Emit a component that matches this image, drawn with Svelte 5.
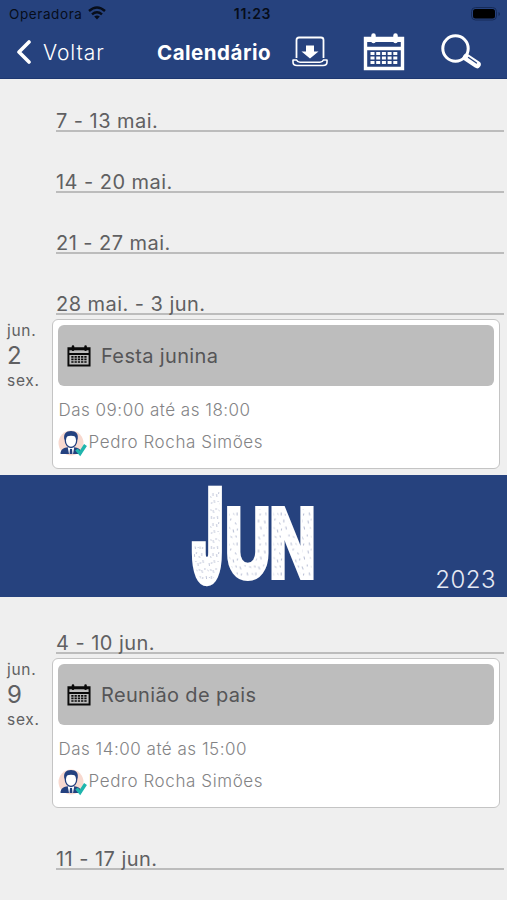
<script lang="ts">
  type CalendarEvent = {
    month: string;
    day: number;
    weekday: string;
    title: string;
    time: string;
    author: string;
  };

  type Week = { label: string; event?: CalendarEvent };

  const author = 'Pedro Rocha Simões';

  const may: Week[] = [
    { label: '7 - 13 mai.' },
    { label: '14 - 20 mai.' },
    { label: '21 - 27 mai.' },
    {
      label: '28 mai. - 3 jun.',
      event: { month: 'jun.', day: 2, weekday: 'sex.', title: 'Festa junina', time: 'Das 09:00 até as 18:00', author }
    }
  ];

  const june: Week[] = [
    {
      label: '4 - 10 jun.',
      event: { month: 'jun.', day: 9, weekday: 'sex.', title: 'Reunião de pais', time: 'Das 14:00 até as 15:00', author }
    },
    { label: '11 - 17 jun.' }
  ];

  // Small scratches for the chalk texture of the month name
  const scratches = [
    [3, 4, 1, 3], [9, 2, -1, 2], [15, 6, 2, 2], [22, 3, 0, 3], [6, 11, 2, 1],
    [12, 13, 1, 3], [19, 12, -1, 2], [25, 10, 1, 3], [2, 18, 0, 2], [8, 20, 3, 1],
    [16, 19, 1, 2], [22, 20, 2, 3], [5, 26, 1, 3], [12, 27, 2, 1], [18, 26, 0, 3], [25, 27, -1, 2]
  ];

  // Each letter of the month name is squeezed on its own
  const monthLetters = [
    { char: 'J', x: 4, y: 95, scale: 0.4, size: 122, stroke: 8, weight: 900 },
    { char: 'U', x: 36, y: 91.5, scale: 0.67, size: 93, stroke: 5, weight: 700 },
    { char: 'N', x: 80.5, y: 91.5, scale: 0.65, size: 93, stroke: 5, weight: 700 }
  ];
</script>

{#snippet calendarIcon()}
  <svg class="calendar-icon" viewBox="0 0 42 38" aria-hidden="true">
    <path d="M2.500 5.500H39.500V35.500H2.500ZM2.500 15.500H39.500" fill="none" stroke="currentColor" stroke-width="3.400" />
    <path d="M2 5H40V9H2Z" fill="currentColor" />
    <path d="M10.500 2.500V8M32.500 2.500V8" stroke="currentColor" stroke-width="4.500" stroke-linecap="round" />
    {#each [20.500, 25, 29.500] as y}
      <path d="M7.500 {y}H34.500" stroke="currentColor" stroke-width="3" stroke-dasharray="4 1.700" />
    {/each}
  </svg>
{/snippet}

{#snippet weekList(weeks: Week[])}
  {#each weeks as week}
    <section class="week">
      <h2>{week.label}</h2>
      {#if week.event}
        <div class="event-row">
          <div class="date">
            <span>{week.event.month}</span>
            <strong>{week.event.day}</strong>
            <span>{week.event.weekday}</span>
          </div>
          <article class="card">
            <div class="card-title">
              {@render calendarIcon()}
              <span>{week.event.title}</span>
            </div>
            <p class="time">{week.event.time}</p>
            <div class="author">
              <svg class="avatar" viewBox="0 0 30 28" aria-hidden="true">
                <circle cx="13" cy="13" r="12.500" fill="#f8d9cf" />
                <path d="M2.500 24C2.500 19 6 18 10 17L13 20L16 17C20 18 23.500 19 23.500 24Z" fill="#24417f" />
                <path d="M9.500 16L11 24H15L16.500 16Z" fill="#fff" />
                <path d="M12 19H14L14.500 24H11.500Z" fill="#24417f" />
                <ellipse cx="13" cy="10.500" rx="5.700" ry="7" fill="#fff" stroke="#24417f" stroke-width="1.300" />
                <path d="M6.500 10C5 4 8 1 13 1S21 4 19.500 10L17.500 6.500Q13 5 8.500 6.500Z" fill="#24417f" />
                <path d="M18.500 19.500L22 23.500L27.500 15" fill="none" stroke="#1fb5ad" stroke-width="3.400" />
              </svg>
              <span>{week.event.author}</span>
            </div>
          </article>
        </div>
      {/if}
    </section>
  {/each}
{/snippet}

<div class="screen">
  <header>
    <div class="status">
      <div class="carrier">
        <span>Operadora</span>
        <svg class="wifi" viewBox="0 0 18 14" aria-hidden="true">
          <path d="M1 5Q9 -2 17 5M4 8.300Q9 4 14 8.300" fill="none" stroke="currentColor" stroke-width="2.400" />
          <path d="M6.200 10.500Q9 8.500 11.800 10.500L9 13.500Z" fill="currentColor" />
        </svg>
      </div>
      <span class="clock">11:23</span>
      <svg class="battery" viewBox="0 0 30 14" aria-hidden="true">
        <rect x="0.500" y="0.500" width="25" height="12.500" rx="4" fill="none" stroke="#162b59" />
        <rect x="2" y="2" width="22" height="9.500" rx="2.500" />
        <path d="M27.500 5V9Q29 8.500 29 7T27.500 5Z" fill="#162b59" />
      </svg>
    </div>
    <nav>
      <button type="button" class="back">
        <svg viewBox="0 0 16 24" aria-hidden="true">
          <path d="M13 2L3 12L13 22" fill="none" stroke="currentColor" stroke-width="3.600" stroke-linecap="round" stroke-linejoin="round" />
        </svg>
        <span>Voltar</span>
      </button>
      <h1>Calendário</h1>
      <div class="actions">
        <button type="button" aria-label="Baixar">
          <svg class="download" viewBox="0 0 36 32" aria-hidden="true">
            <path d="M4.500 22V4Q4.500 1.500 7 1.500H29Q31.500 1.500 31.500 4V22" fill="none" stroke="currentColor" stroke-width="1.800" />
            <path d="M1 23.500V26Q1 29.500 5 29.500H31Q35 29.500 35 26V23.500M1 24H4.500Q5.500 26.200 8 26.200H28Q30.500 26.200 31.500 24H35" fill="none" stroke="currentColor" stroke-width="1.600" />
            <path d="M14 9.500H22V15.500H26.500L18 22.500L9.500 15.500H14Z" fill="currentColor" />
          </svg>
        </button>
        <button type="button" aria-label="Calendário">{@render calendarIcon()}</button>
        <button type="button" aria-label="Buscar">
          <svg class="search" viewBox="0 0 42 36" aria-hidden="true">
            <circle cx="14.500" cy="14.500" r="12.700" fill="none" stroke="currentColor" stroke-width="3" />
            <path d="M25.500 23.500L36 30.500" stroke="currentColor" stroke-width="7.500" stroke-linecap="round" />
            <path d="M27.500 23.500L35.500 29" stroke="#26427e" stroke-width="1.300" stroke-linecap="round" />
          </svg>
        </button>
      </div>
    </nav>
  </header>

  <main>
    {@render weekList(may)}
    <div class="month-banner">
      <svg class="month-name" viewBox="0 0 130 104" role="img" aria-label="Jun">
        <defs>
          <pattern id="chalk" width="28" height="30" patternUnits="userSpaceOnUse">
            <rect width="28" height="30" fill="#fff" />
            {#each scratches as [x, y, dx, dy]}
              <path d="M{x} {y}l{dx} {dy}" stroke="#98a1c0" stroke-width="0.900" />
            {/each}
          </pattern>
        </defs>
        {#each monthLetters as letter}
          <text
            class="month-letter"
            transform="translate({letter.x} {letter.y}) scale({letter.scale} 1)"
            font-size={letter.size}
            font-weight={letter.weight}
            stroke-width={letter.stroke}
          >{letter.char}</text>
        {/each}
      </svg>
      <span class="year">2023</span>
    </div>
    {@render weekList(june)}
  </main>
</div>

<style>
  :global(body) {
    background: #efefef;
  }

  .screen {
    height: 900px;
    overflow: hidden;
    background: #efefef;
    color: #606062;
    font-family: Inter, 'Liberation Sans', sans-serif;
  }

  header {
    height: 79px;
    box-sizing: border-box;
    border-bottom: 1px solid #1d3770;
    background: #26427e;
    color: #fff;
  }

  .status {
    display: grid;
    grid-template-columns: 1fr auto 1fr;
    align-items: center;
    height: 27px;
    padding: 0 6px 0 9px;
    color: #070d1a;
    font-size: 13.5px;
  }

  .carrier {
    display: flex;
    align-items: center;
    gap: 5px;
    letter-spacing: 0.6px;
  }

  .wifi {
    width: 18px;
    height: 14px;
    margin-top: -2px;
  }

  .clock {
    margin: 0 1px 0 -4px;
    font-size: 14px;
    font-weight: 600;
    letter-spacing: 0.7px;
  }

  .battery {
    width: 30px;
    height: 14px;
    justify-self: end;
  }

  nav {
    display: flex;
    align-items: center;
    height: 50px;
    padding-left: 16px;
  }

  button {
    display: flex;
    align-items: center;
    padding: 0;
    border: 0;
    background: none;
    color: inherit;
    font: inherit;
  }

  .back {
    width: 141px;
    gap: 11px;
    font-size: 21px;
    font-weight: 300;
    letter-spacing: 0.9px;
  }

  .back svg {
    width: 16px;
    height: 24px;
  }

  h1 {
    width: 135px;
    margin: 0;
    font-size: 20.5px;
    font-weight: 700;
    letter-spacing: 0.5px;
    white-space: nowrap;
  }

  .actions {
    display: flex;
    align-items: center;
  }

  .download {
    width: 36px;
    height: 32px;
    margin-right: 35px;
  }

  .actions .calendar-icon {
    width: 42px;
    height: 38px;
    margin-right: 36px;
  }

  .search {
    width: 42px;
    height: 36px;
    margin-top: -1px;
  }

  main {
    padding-top: 22px;
  }

  .week {
    margin-bottom: 30px;
  }

  h2 {
    box-sizing: border-box;
    height: 31px;
    margin: 0 3px 0 56px;
    border-bottom: 2px solid #bcbcbc;
    font-size: 20px;
    font-weight: 400;
    line-height: 40px;
    letter-spacing: 0.45px;
  }

  .event-row {
    display: flex;
    padding-top: 4px;
  }

  .date {
    display: flex;
    flex-direction: column;
    width: 45px;
    padding-left: 7px;
    font-size: 15.5px;
    font-weight: 400;
    letter-spacing: 0.7px;
    line-height: 24px;
  }

  .date strong {
    font-size: 24px;
    font-weight: 400;
    line-height: 26px;
  }

  .card {
    box-sizing: border-box;
    width: 448px;
    height: 150px;
    padding: 5px 5px 5px 4.5px;
    border: 1.5px solid #c4c4c4;
    border-radius: 6px;
    background: #fff;
    color: #838385;
    font-size: 17px;
    font-weight: 300;
    letter-spacing: 0.5px;
  }

  .card-title {
    display: flex;
    align-items: center;
    gap: 10.5px;
    height: 61px;
    margin-right: 0.5px;
    padding-left: 9px;
    border-radius: 6px;
    background: #bdbdbd;
    color: #555557;
    font-size: 20px;
    font-weight: 400;
    letter-spacing: 0.35px;
  }

  .card-title .calendar-icon {
    width: 24px;
    height: 22px;
    color: #0a0a0a;
  }

  .time {
    height: 32px;
    margin: 8px 0 0;
    padding-left: 1px;
    line-height: 32px;
    letter-spacing: 0.5px;
  }

  .author {
    display: flex;
    align-items: center;
    gap: 1px;
    height: 32px;
    letter-spacing: 0.6px;
  }

  .avatar {
    width: 30px;
    height: 28px;
    margin-top: 3px;
  }

  .month-banner {
    position: relative;
    display: flex;
    justify-content: center;
    height: 122px;
    margin-top: -24px;
    background: #26427e;
  }

  .month-name {
    width: 130px;
    height: 104px;
    margin-top: 10px;
    overflow: visible;
  }

  .month-letter {
    fill: url(#chalk);
    stroke: #fff;
    paint-order: stroke;
    vector-effect: non-scaling-stroke;
  }

  .year {
    position: absolute;
    right: 11px;
    bottom: 3px;
    color: #e6eaf4;
    font-size: 24px;
    font-weight: 300;
    letter-spacing: 0.5px;
  }

  .month-banner + .week {
    margin-top: 26px;
    margin-bottom: 31px;
  }
</style>
